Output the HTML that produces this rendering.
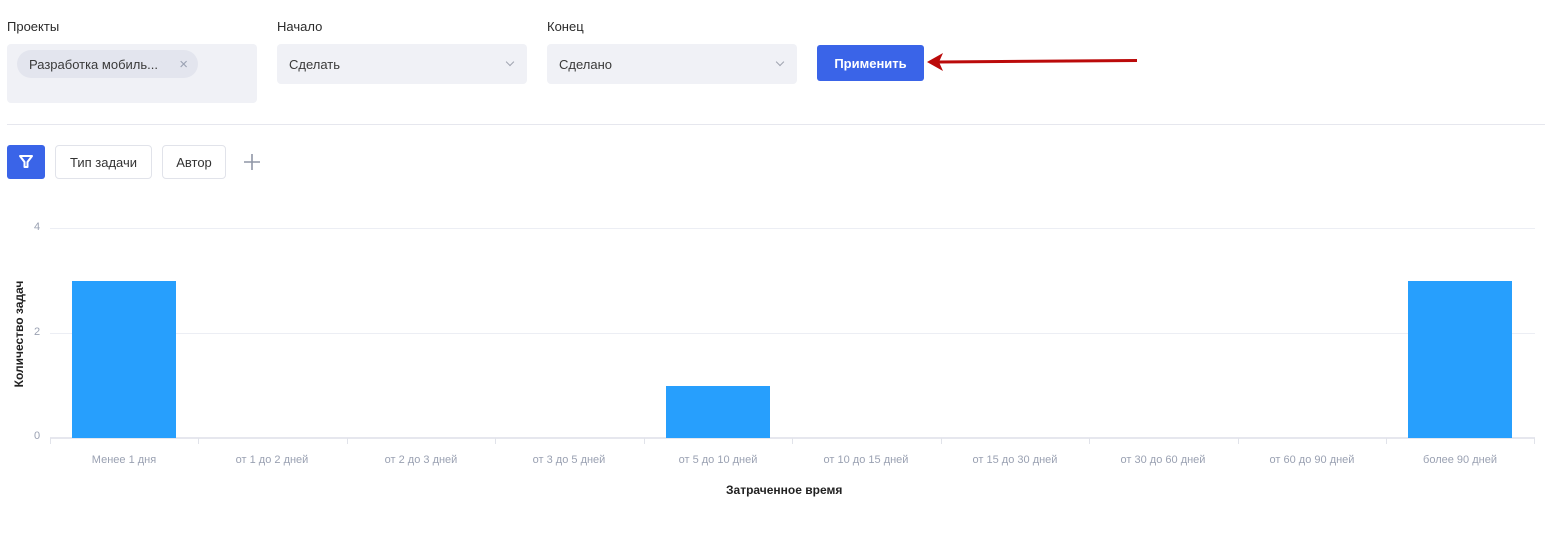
<!DOCTYPE html>
<html><head><meta charset="utf-8"><style>
body{margin:0;width:1549px;height:539px;background:#fff;font-family:"Liberation Sans",sans-serif;position:relative;overflow:hidden}
.a{position:absolute}
.lbl{font-size:13px;color:#2b2b2b}
.box{background:#f0f1f6;border-radius:4px}
.sel{font-size:13px;color:#3a3a3a;line-height:41px;padding-left:12px;box-sizing:border-box}
.chev{position:absolute;right:14px;top:15px;width:5px;height:5px;border-right:1.5px solid #a0a4b0;border-bottom:1.5px solid #a0a4b0;transform:rotate(45deg)}
.btn{border:1px solid #e1e3ea;border-radius:4px;font-size:13px;color:#333;text-align:center;line-height:34px;box-sizing:border-box}
.xl{font-size:11px;color:#9aa1b2;text-align:center;width:148px;top:454px}
.yl{font-size:11px;color:#9aa1b2;left:34px}
.grid{left:50px;width:1485px;height:1px;background:#eceef4}
.bar{background:#279ffd;width:104px}
.tick{width:1px;height:6px;background:#e1e3ea;top:438px}
</style></head><body>
<div class="a lbl" style="left:7px;top:19px">Проекты</div>
<div class="a lbl" style="left:277px;top:19px">Начало</div>
<div class="a lbl" style="left:547px;top:19px">Конец</div>
<div class="a box" style="left:7px;top:44px;width:250px;height:59px"></div>
<div class="a" style="left:17px;top:50px;width:181px;height:28px;border-radius:14px;background:#e3e5ee;font-size:13px;color:#3a3a3a;line-height:29px;padding-left:12px;box-sizing:border-box">Разработка мобиль...<span style="position:absolute;right:10px;color:#9aa1b2;font-size:15px">×</span></div>
<div class="a box sel" style="left:277px;top:44px;width:250px;height:40px">Сделать<div class="chev"></div></div>
<div class="a box sel" style="left:547px;top:44px;width:250px;height:40px">Сделано<div class="chev"></div></div>
<div class="a" style="left:817px;top:45px;width:107px;height:36px;background:#3a64e8;border-radius:3px;color:#fff;font-size:13px;font-weight:bold;text-align:center;line-height:37px">Применить</div>
<svg class="a" style="left:925px;top:50px" width="215" height="24"><path d="M14 10.5 L212 9 L212 12 L14 13.5 Z" fill="#bb0a0a"/><path d="M2 12 L18 3 L14 12 L18 21 Z" fill="#bb0a0a"/></svg>
<div class="a" style="left:7px;top:124px;width:1538px;height:1px;background:#e6e7ee"></div>
<div class="a" style="left:7px;top:145px;width:38px;height:34px;background:#3a64e8;border-radius:3px"><svg width="38" height="34"><path d="M13 11 H25 L20.5 17 V22 H17.5 V17 Z" fill="none" stroke="#fff" stroke-width="2" stroke-linejoin="round"/></svg></div>
<div class="a btn" style="left:55px;top:145px;width:97px;height:34px">Тип задачи</div>
<div class="a btn" style="left:162px;top:145px;width:64px;height:34px">Автор</div>
<svg class="a" style="left:242px;top:152px" width="20" height="20"><path d="M10 2V18M2 10H18" stroke="#8f96a6" stroke-width="1.6"/></svg>
<div class="a grid" style="top:228px"></div>
<div class="a grid" style="top:333px"></div>
<div class="a" style="left:50px;top:437px;width:1485px;height:2px;background:#e6e7ee"></div>
<div class="a yl" style="top:221px">4</div>
<div class="a yl" style="top:326px">2</div>
<div class="a yl" style="top:430px">0</div>
<div class="a tick" style="left:50px"></div><div class="a tick" style="left:198px"></div><div class="a tick" style="left:347px"></div><div class="a tick" style="left:495px"></div><div class="a tick" style="left:644px"></div><div class="a tick" style="left:792px"></div><div class="a tick" style="left:941px"></div><div class="a tick" style="left:1089px"></div><div class="a tick" style="left:1238px"></div><div class="a tick" style="left:1386px"></div><div class="a tick" style="left:1534px"></div>
<div class="a bar" style="left:72px;top:281px;height:157px"></div>
<div class="a bar" style="left:666px;top:386px;height:52px"></div>
<div class="a bar" style="left:1408px;top:281px;height:157px"></div>
<div class="a xl" style="left:50px">Менее 1 дня</div>
<div class="a xl" style="left:198px">от 1 до 2 дней</div>
<div class="a xl" style="left:347px">от 2 до 3 дней</div>
<div class="a xl" style="left:495px">от 3 до 5 дней</div>
<div class="a xl" style="left:644px">от 5 до 10 дней</div>
<div class="a xl" style="left:792px">от 10 до 15 дней</div>
<div class="a xl" style="left:941px">от 15 до 30 дней</div>
<div class="a xl" style="left:1089px">от 30 до 60 дней</div>
<div class="a xl" style="left:1238px">от 60 до 90 дней</div>
<div class="a xl" style="left:1386px">более 90 дней</div>
<div class="a" style="left:726px;top:483px;font-size:12px;font-weight:bold;color:#222">Затраченное время</div>
<div class="a" style="left:19px;top:334px;font-size:12px;font-weight:bold;color:#222;white-space:nowrap;transform:translate(-50%,-50%) rotate(-90deg)">Количество задач</div>
</body></html>
